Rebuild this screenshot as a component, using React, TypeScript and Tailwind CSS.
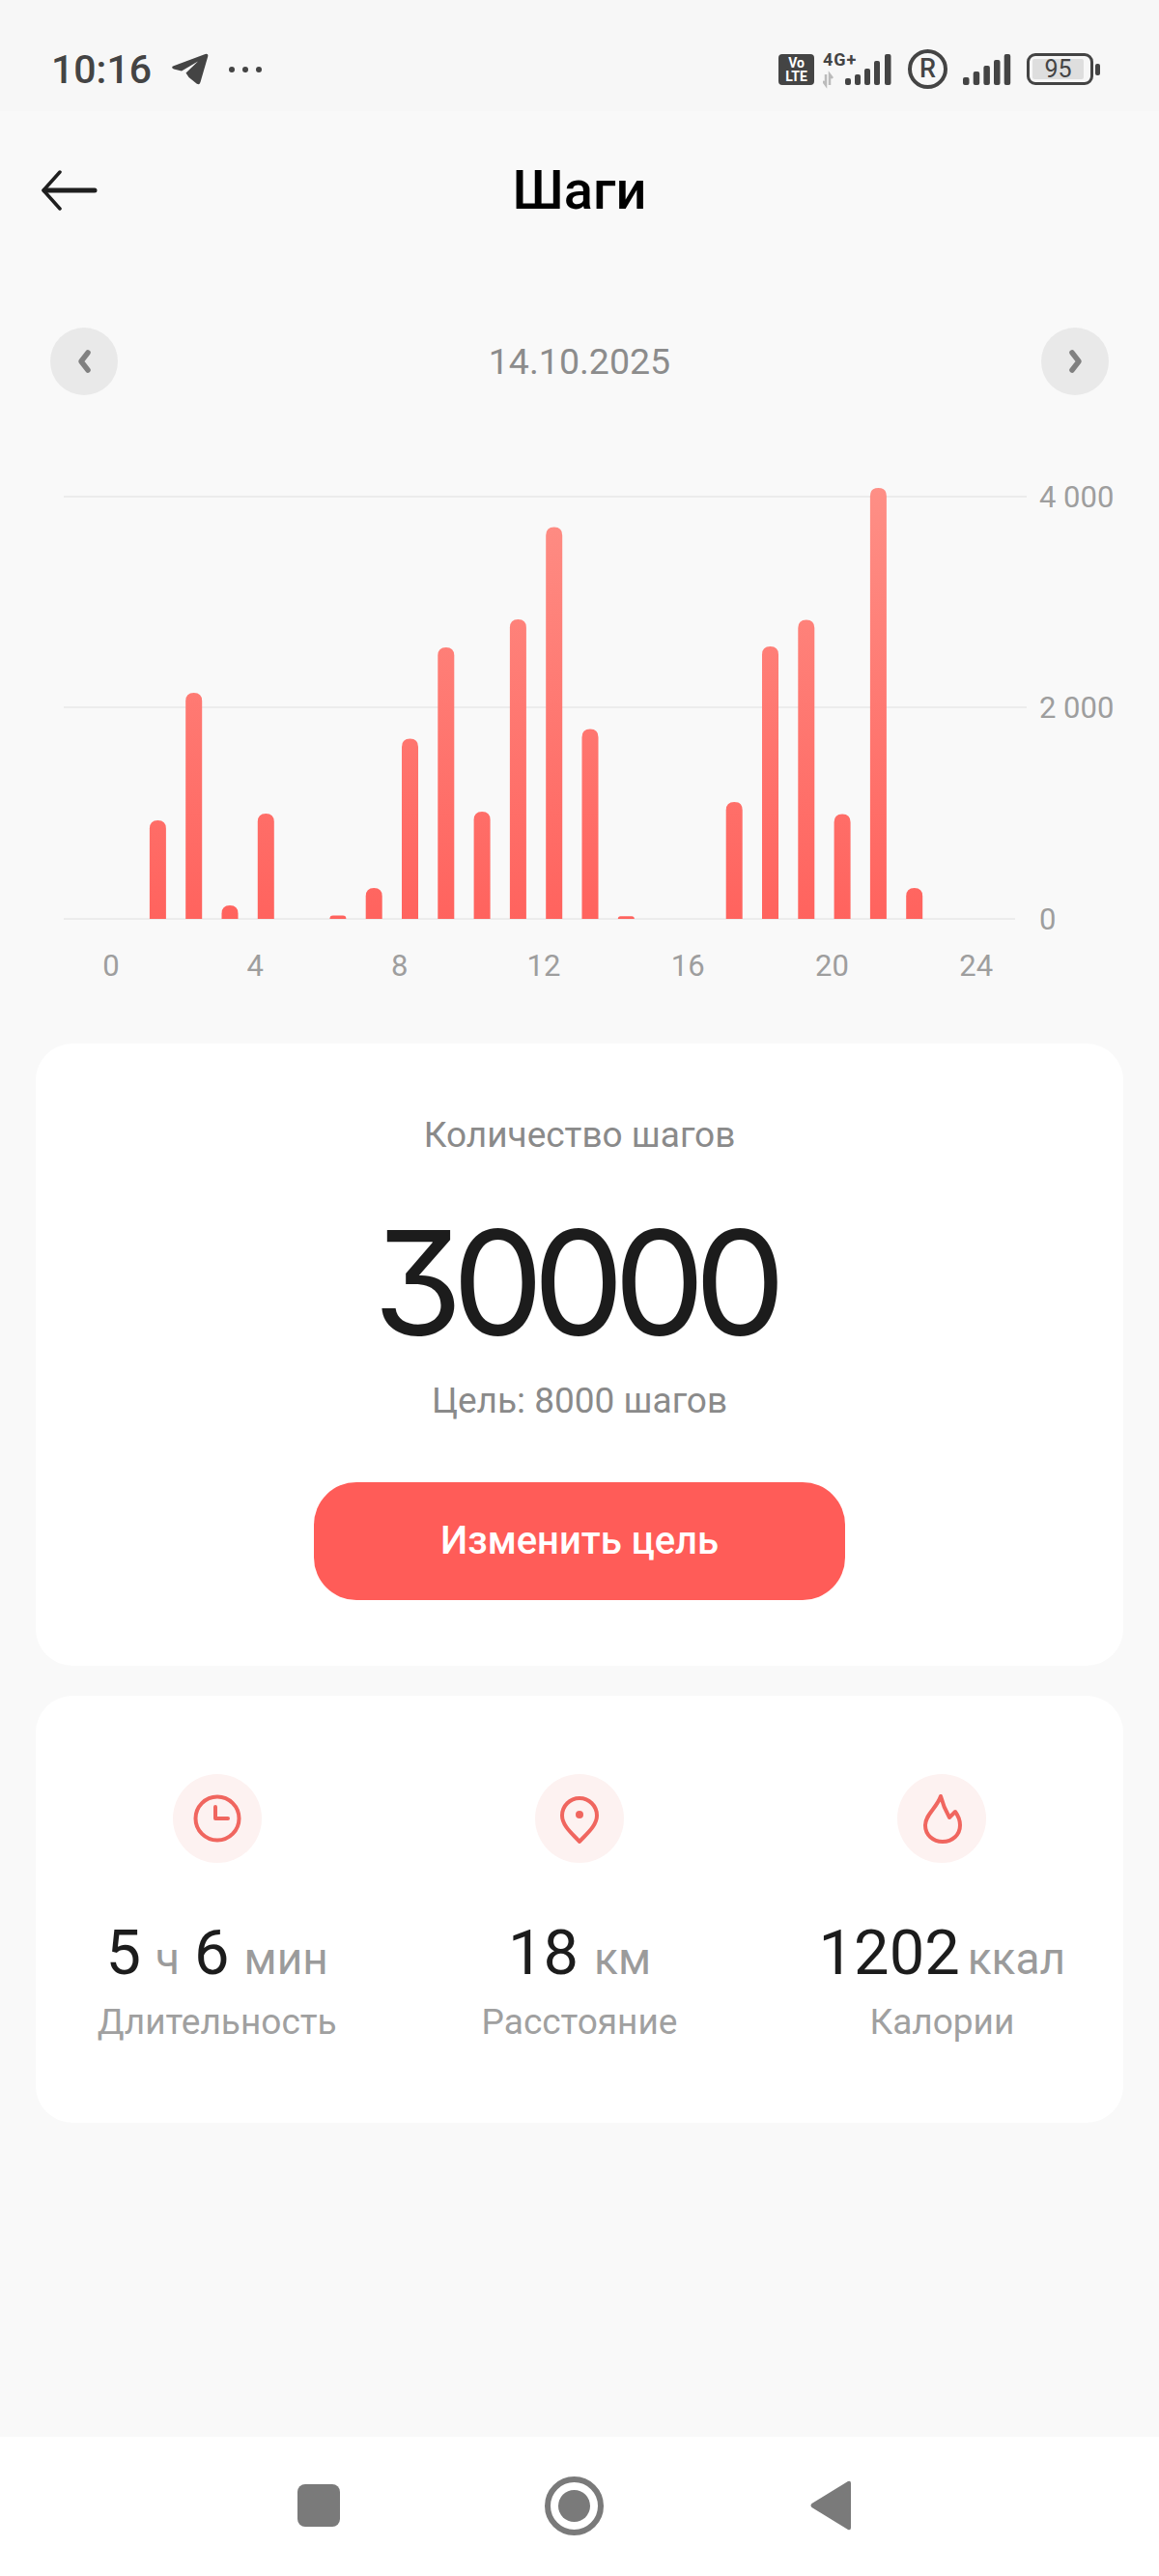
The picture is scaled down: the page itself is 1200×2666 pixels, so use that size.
import React from 'react';

const bars = [
    { hour: 1, top: 849 },
    { hour: 2, top: 717 },
    { hour: 3, top: 937 },
    { hour: 4, top: 842 },
    { hour: 6, top: 947.6 },
    { hour: 7, top: 919 },
    { hour: 8, top: 764.5 },
    { hour: 9, top: 670 },
    { hour: 10, top: 840 },
    { hour: 11, top: 641 },
    { hour: 12, top: 545.5 },
    { hour: 13, top: 754.5 },
    { hour: 14, top: 948.3 },
    { hour: 17, top: 830 },
    { hour: 18, top: 669 },
    { hour: 19, top: 641.6 },
    { hour: 20, top: 842.5 },
    { hour: 21, top: 505 },
    { hour: 22, top: 919 },
];

const BASE = 951;

const barPath = (x: number, top: number) => {
    const h = BASE - top;
    const r = Math.min(8.5, h);
    const l = x - 8.5;
    const rr = x + 8.5;
    return `M${l} ${BASE} V${top + r} Q${l} ${top} ${l + r} ${top} H${rr - r} Q${rr} ${top} ${rr} ${top + r} V${BASE} Z`;
};

const Signal = () => (
    <svg width="50" height="32" viewBox="0 0 50 32" fill="#444">
        <rect x="0" y="24" width="6.5" height="8" rx="2" />
        <rect x="10.7" y="18" width="6.5" height="14" rx="2" />
        <rect x="21.4" y="12" width="6.5" height="20" rx="2" />
        <rect x="32" y="6" width="6.5" height="26" rx="2" />
        <rect x="42.7" y="0" width="6.5" height="32" rx="2" />
    </svg>
);

const StatusBar = () => (
    <div className="h-[115px] bg-[#f7f7f7] flex items-center justify-between pl-[53px] pr-[61px] pt-[28px] font-['Roboto',sans-serif] text-[#444]">
        <div className="flex items-center">
            <span className="text-[41px] leading-[46px] font-medium">10:16</span>
            <svg className="ml-[21px]" width="38" height="33" viewBox="0 0 38 33" fill="#444">
                <path d="M1 13.5 L34.5 1 Q38 0 37.2 3.5 L29.5 30 Q28.5 33.5 25.5 31.5 L17.5 25 L14.5 20.5 L27 8.5 L10 18.5 L2 16.5 Q-1 15 1 13.5 Z" />
            </svg>
            <div className="ml-[21px] flex gap-[8px]">
                <div className="w-[6px] h-[6px] rounded-full bg-[#444]" />
                <div className="w-[6px] h-[6px] rounded-full bg-[#444]" />
                <div className="w-[6px] h-[6px] rounded-full bg-[#444]" />
            </div>
        </div>
        <div className="flex items-center">
            <div className="w-[37px] h-[32px] rounded-[4px] bg-[#444] text-white text-[14px] leading-[14px] font-bold flex flex-col items-center justify-center">
                <span>Vo</span>
                <span>LTE</span>
            </div>
            <svg className="ml-[9px]" width="72" height="44" viewBox="0 -6 72 44" fill="#444">
                <text x="0" y="12" fontFamily="Roboto, sans-serif" fontSize="18" fontWeight="700" letterSpacing="1">4G+</text>
                <path d="M3 21 L3 32 L0 28 M7 32 L7 21 L10 25" fill="none" stroke="#bbb" strokeWidth="2.5" />
                <rect x="23" y="25" width="6" height="7" rx="2" />
                <rect x="33" y="21" width="6" height="11" rx="2" />
                <rect x="43" y="15" width="6" height="17" rx="2" />
                <rect x="53" y="7" width="6" height="25" rx="2" />
                <rect x="64" y="0" width="6.5" height="32" rx="2" />
            </svg>
            <div className="ml-[16px] w-[41px] h-[41px] rounded-full border-4 border-[#444] flex items-center justify-center text-[27px] font-medium leading-none">R</div>
            <div className="ml-[16px] flex">
                <Signal />
            </div>
            <div className="ml-[16px] flex items-center">
                <div className="w-[69px] h-[33px] rounded-[9px] border-[3px] border-[#444] p-[3px]">
                    <div className="h-full w-[53px] bg-[#dedede] rounded-[2px] flex items-center justify-center text-[25px] leading-none">95</div>
                </div>
                <div className="ml-[2px] w-[5px] h-[12px] rounded-[2px] bg-[#444]" />
            </div>
        </div>
    </div>
);

const Header = () => (
    <div className="h-[164px] flex items-center justify-between pl-[42px] pr-[42px]">
        <svg width="60" height="42" viewBox="0 0 60 42" fill="none" stroke="#1f1f1f" strokeLinecap="round" strokeLinejoin="round">
            <path d="M20 2 L3 21 L20 40" strokeWidth="3.5" />
            <path d="M4 21 H56" strokeWidth="5" />
        </svg>
        <span className="text-[56px] leading-[60px] font-medium text-black">Шаги</span>
        <div className="w-[60px]" />
    </div>
);

const DateRow = () => (
    <div className="mt-[60px] flex items-center justify-between px-[52px]">
        <div className="w-[70px] h-[70px] rounded-full bg-[#e9e9e9] flex items-center justify-center">
            <svg width="16" height="26" viewBox="0 0 16 26" fill="none" stroke="#808080" strokeWidth="5.5" strokeLinecap="round" strokeLinejoin="round">
                <path d="M12 4 L5 13 L12 22" />
            </svg>
        </div>
        <span className="text-[37.5px] leading-[44px] text-[#8c8c8c]">14.10.2025</span>
        <div className="w-[70px] h-[70px] rounded-full bg-[#e9e9e9] flex items-center justify-center">
            <svg className="ml-[3px]" width="16" height="26" viewBox="0 0 16 26" fill="none" stroke="#808080" strokeWidth="5.5" strokeLinecap="round" strokeLinejoin="round">
                <path d="M4 4 L11 13 L4 22" />
            </svg>
        </div>
    </div>
);

const Chart = () => (
    <svg className="block mt-[71px] mb-[40px]" width="1200" height="560" viewBox="0 480 1200 560">
        <defs>
            <linearGradient id="barFill" gradientUnits="userSpaceOnUse" x1="0" y1="505" x2="0" y2="951">
                <stop offset="0" stopColor="#fe8f86" />
                <stop offset="1" stopColor="#ff635e" />
            </linearGradient>
        </defs>
        <line x1="66" y1="514" x2="1063" y2="514" stroke="#ececec" strokeWidth="2" />
        <line x1="66" y1="732" x2="1063" y2="732" stroke="#ececec" strokeWidth="2" />
        <line x1="66" y1="951" x2="1051" y2="951" stroke="#ececec" strokeWidth="2" />
        {bars.map(b => (
            <path key={b.hour} d={barPath(126.1 + 37.3 * b.hour, b.top)} fill="url(#barFill)" />
        ))}
        <g fontFamily="Roboto, sans-serif" fontSize="31" fill="#9e9e9e">
            {[0, 4, 8, 12, 16, 20, 24].map((h, i) => (
                <text key={h} x={115 + 149.3 * i} y="1010" textAnchor="middle">{h}</text>
            ))}
            <text x="1076" y="525">4 000</text>
            <text x="1076" y="743">2 000</text>
            <text x="1076" y="962">0</text>
        </g>
    </svg>
);

const GoalCard = () => (
    <div className="mx-[37px] h-[644px] bg-white rounded-[38px] flex flex-col items-center pt-[73px]">
        <span className="text-[37px] leading-[44px] text-[#8a8a8a]">Количество шагов</span>
        <span className="mt-[66px] h-[130px] font-['Inter',sans-serif] [font-feature-settings:'cv09'] text-[150px] leading-[130px] font-normal tracking-[-11px] pr-[11px] text-[#1c1c1c]">30000</span>
        <span className="mt-[35px] text-[37px] leading-[44px] text-[#8a8a8a]">Цель: 8000 шагов</span>
        <button className="mt-[62px] w-[550px] h-[122px] rounded-[44px] bg-[#ff5c58] text-white text-[40px] font-medium">Изменить цель</button>
    </div>
);

const ClockIcon = () => (
    <svg width="92" height="92" viewBox="0 0 92 92" fill="none" stroke="#f0665f" strokeWidth="4" strokeLinecap="round" strokeLinejoin="round">
        <circle cx="46" cy="46" r="22.5" />
        <path d="M44 34 V46 H57" />
    </svg>
);

const PinIcon = () => (
    <svg width="92" height="92" viewBox="0 0 92 92" fill="none" stroke="#f0665f" strokeWidth="4" strokeLinecap="round" strokeLinejoin="round">
        <path d="M46 70 C40 63 28 54 28 43 A18 18 0 0 1 64 43 C64 54 52 63 46 70 Z" />
        <circle cx="46" cy="42" r="4" fill="#f0665f" stroke="none" />
    </svg>
);

const FlameIcon = () => (
    <svg width="92" height="92" viewBox="0 0 92 92" fill="none" stroke="#f0665f" strokeWidth="4" strokeLinecap="round" strokeLinejoin="round">
        <path d="M45 23 C47 31 50 38 54 45 C56 43 58 41 60 39 C63 43 65 47 65 53 C65 63 57 70 47 70 C37 70 29 63 29 53 C29 42 41 35 45 23 Z" />
    </svg>
);

const Num = ({ children }: { children: React.ReactNode }) => (
    <span className="text-[65px] leading-[76px] text-[#1c1c1c]">{children}</span>
);

const Unit = ({ children }: { children: React.ReactNode }) => (
    <span className="text-[46px] leading-[76px] text-[#9b9b9b]">{children}</span>
);

const Stat = ({ icon, label, value }: { icon: React.ReactNode; label: string; value: React.ReactNode }) => (
    <div className="flex flex-col items-center">
        <div className="w-[92px] h-[92px] rounded-full bg-[#fdf2f1]">{icon}</div>
        <div className="mt-[55px] flex items-baseline justify-center">{value}</div>
        <span className="mt-[6px] text-[37px] leading-[44px] text-[#a0a0a0]">{label}</span>
    </div>
);

const StatsCard = () => (
    <div className="mx-[37px] mt-[31px] h-[442px] bg-white rounded-[38px] grid grid-cols-3 pt-[81px]">
        <Stat
            icon={<ClockIcon />}
            label="Длительность"
            value={
                <div className="flex items-baseline gap-[15px]">
                    <Num>5</Num>
                    <Unit>ч</Unit>
                    <Num>6</Num>
                    <Unit>мин</Unit>
                </div>
            }
        />
        <Stat
            icon={<PinIcon />}
            label="Расстояние"
            value={
                <div className="flex items-baseline gap-[16px]">
                    <Num>18</Num>
                    <Unit>км</Unit>
                </div>
            }
        />
        <Stat
            icon={<FlameIcon />}
            label="Калории"
            value={
                <div className="flex items-baseline gap-[8px]">
                    <Num>1202</Num>
                    <Unit>ккал</Unit>
                </div>
            }
        />
    </div>
);

const NavBar = () => (
    <div className="mt-auto h-[144px] bg-white flex items-center pl-[308px] pb-[2px]">
        <div className="w-[44px] h-[44px] rounded-[8px] bg-[#7a7a7a]" />
        <div className="ml-[212px] w-[61px] h-[61px] rounded-full border-[6px] border-[#7a7a7a] flex items-center justify-center">
            <div className="w-[33px] h-[33px] rounded-full bg-[#7a7a7a]" />
        </div>
        <svg className="ml-[214px]" width="42" height="52" viewBox="0 0 42 52" fill="#7a7a7a">
            <path d="M39 1 Q42 0 42 3 V49 Q42 52 39 51 L1.5 28 Q-0.5 26 1.5 24 Z" />
        </svg>
    </div>
);

const App: React.FC = () => {
    return (
        <div className="w-[1200px] h-[2666px] bg-[#f9f9f9] flex flex-col font-['Roboto',sans-serif]">
            <StatusBar />
            <Header />
            <DateRow />
            <Chart />
            <GoalCard />
            <StatsCard />
            <NavBar />
        </div>
    );
};

export default App;
